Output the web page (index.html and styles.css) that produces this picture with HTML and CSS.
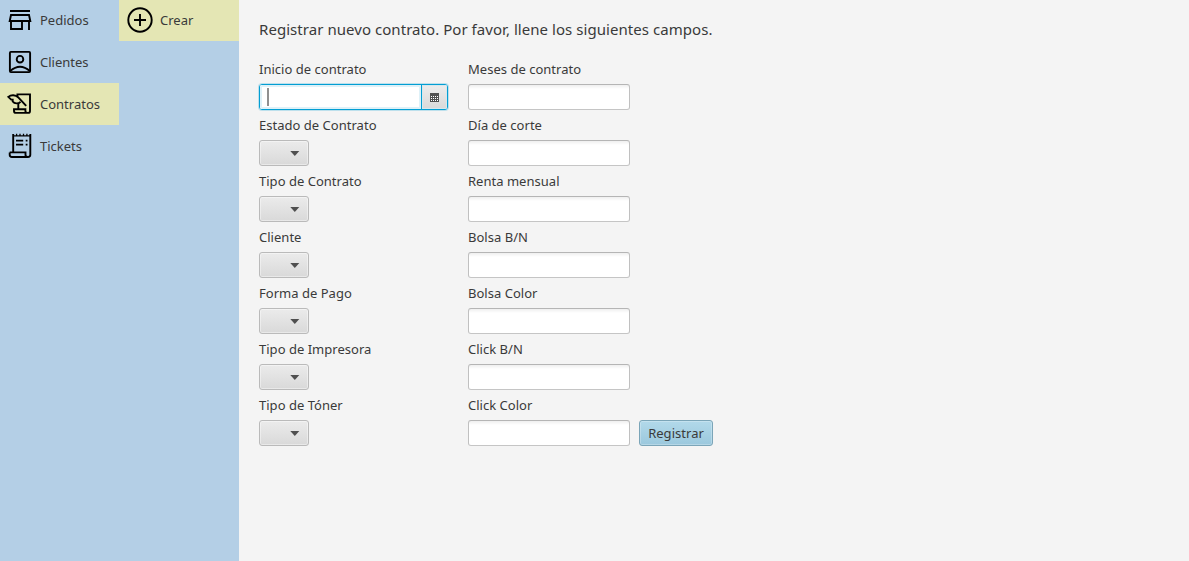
FILE: index.html
```
<!DOCTYPE html>
<html lang="es">
<head>
<meta charset="utf-8">
<title>Contratos</title>
<link rel="stylesheet" href="styles.css">
</head>
<body>
<div class="app">
  <nav class="menu">
    <a class="item"><svg class="icon" viewBox="0 0 30 30"><path d="M5 6h20M6 10h18l1.3 6H4.7zM6 16v8h11v-8M24 16v9"/></svg><span>Pedidos</span></a>
    <a class="item"><svg class="icon" viewBox="0 0 30 30"><rect x="4.9" y="4.9" width="20.2" height="20.2" rx="1"/><circle cx="15" cy="12.2" r="3.3"/><path d="M5.2 24Q15 15.4 24.8 24"/></svg><span>Clientes</span></a>
    <a class="item active"><svg class="icon" viewBox="0 0 30 30"><path d="M12.4 8V5.4H25V22q0 1.9-1.9 1.9H11q-2 0-2-2v-1.7h11.4V22q0 1.9 2.2 1.9M13.3 14.5v5.5"/><path d="M21.2 16.8L13.5 8.6C10.5 5.5 6 5.6 3.3 7.9l2.9 2.7h1.5v1.9c1.8 2.5 5.8 2.5 7.8.3"/></svg><span>Contratos</span></a>
    <a class="item"><svg class="icon" viewBox="0 0 30 30"><path d="M8.2 3v18M4.7 21.4h15.8V24q0 2 2.4 2 2.4 0 2.4-2.2V3M4.7 21.4v2.4Q4.7 26 6.9 26H23"/><path class="thin" d="M8.2 4.8h17.1M11.6 2.8v2M15 2.8v2M18.5 2.8v2M21.9 2.8v2"/><path class="rows" d="M11 9.6h7.2M11 13.6h7.2M20.7 9.6h1.8M20.7 13.6h1.8"/></svg><span>Tickets</span></a>
  </nav>
  <nav class="menu submenu">
    <a class="item active"><svg class="icon" viewBox="0 0 30 30"><circle cx="15" cy="15" r="11.7"/><path d="M15 9v12M9 15h12"/></svg><span>Crear</span></a>
  </nav>
  <main class="content">
    <h1 class="title">Registrar nuevo contrato. Por favor, llene los siguientes campos.</h1>
    <form class="form">
      <div class="column">
        <div class="field"><label>Inicio de contrato</label>
          <div class="datepicker"><div class="date-input"><i class="caret"></i></div><div class="date-button"><svg class="calendar" viewBox="0 0 9 9"><path d="M0 0h9v9H0z"/><path class="dots" d="M1 3h1v1H1zM3 3h1v1H3zM5 3h1v1H5zM7 3h1v1H7zM1 5h1v1H1zM3 5h1v1H3zM5 5h1v1H5zM7 5h1v1H7zM1 7h1v1H1zM3 7h1v1H3zM5 7h1v1H5zM7 7h1v1H7z"/></svg></div></div></div>
        <div class="field"><label>Estado de Contrato</label><div class="combo"><i class="arrow"></i></div></div>
        <div class="field"><label>Tipo de Contrato</label><div class="combo"><i class="arrow"></i></div></div>
        <div class="field"><label>Cliente</label><div class="combo"><i class="arrow"></i></div></div>
        <div class="field"><label>Forma de Pago</label><div class="combo"><i class="arrow"></i></div></div>
        <div class="field"><label>Tipo de Impresora</label><div class="combo"><i class="arrow"></i></div></div>
        <div class="field"><label>Tipo de Tóner</label><div class="combo"><i class="arrow"></i></div></div>
      </div>
      <div class="column second">
        <div class="field"><label>Meses de contrato</label><div class="input"></div></div>
        <div class="field"><label>Día de corte</label><div class="input"></div></div>
        <div class="field"><label>Renta mensual</label><div class="input"></div></div>
        <div class="field"><label>Bolsa B/N</label><div class="input"></div></div>
        <div class="field"><label>Bolsa Color</label><div class="input"></div></div>
        <div class="field"><label>Click B/N</label><div class="input"></div></div>
        <div class="field"><label>Click Color</label><div class="input"></div></div>
      </div>
      <button class="submit" type="button">Registrar</button>
    </form>
  </main>
</div>
</body>
</html>
```
FILE: styles.css
```
* { box-sizing: border-box; }
body {
  margin: 0;
  background: #f4f4f4;
  color: #3a3a3a;
  font: 13px/18px "Noto Sans", sans-serif;
}
.app { display: flex; height: 561px; overflow: hidden; }
.menu { width: 119px; background: #b4cfe6; }
.submenu { width: 120px; }
.item {
  display: flex;
  align-items: center;
  gap: 5px;
  height: 42px;
  padding-left: 5px;
}
.submenu .item { padding-left: 6px; }
.item:first-child { margin-top: -1px; }
.active { background: #e4e6b4; }
.icon {
  width: 30px;
  height: 30px;
  fill: none;
  stroke: #000;
  stroke-width: 1.9;
}
.icon .thin { stroke-width: 1.3; }
.icon .rows { stroke-width: 1.6; }
.content { flex: 1; padding: 19px 20px; }
.title {
  margin: 0;
  font-size: 15px;
  line-height: 20px;
  font-weight: 400;
  letter-spacing: .05px;
}
.form { display: flex; margin-top: 21px; }
.column { width: 209px; }
.second { width: 171px; }
.field { height: 56px; }
.field label { display: block; height: 24px; line-height: 19px; letter-spacing: .02px; }
.input, .combo, .submit {
  height: 26px;
  border: 1px solid #bababa;
  border-radius: 3px;
}
.input {
  width: 162px;
  border-color: #b5b5b5 #c0c0c0 #c5c5c5;
  background: linear-gradient(#efefef, #fff 4px);
}
.combo {
  display: flex;
  align-items: center;
  justify-content: flex-end;
  width: 50px;
  padding-right: 8px;
  background: linear-gradient(#ebebeb, #d9d9d9);
  box-shadow: inset 0 0 0 1px rgba(255, 255, 255, .4);
}
.arrow {
  width: 10px;
  height: 4.8px;
  margin-top: 1px;
  background: #4f4f4f;
  clip-path: polygon(3% 0, 93% 0, 48% 100%);
}
.datepicker {
  display: flex;
  width: 189px;
  height: 26px;
  border: 1px solid #039ed3;
  border-radius: 3px;
  box-shadow: 0 0 0 1px #bde0ec;
  overflow: hidden;
}
.date-input {
  display: flex;
  align-items: center;
  width: 161px;
  padding-left: 7px;
  background: #fff;
  box-shadow: inset 0 0 0 2px #def1f8;
}
.caret { width: 2px; height: 18px; background: #909090; }
.date-button {
  display: flex;
  align-items: center;
  justify-content: center;
  flex: 1;
  padding-right: 1px;
  border-left: 1px solid #039ed3;
  background: linear-gradient(#ececec, #d9d9d9);
  box-shadow: inset 0 0 0 1px #d7e7ed;
}
.calendar { width: 9px; height: 9px; fill: #4f4f4f; }
.calendar .dots { fill: #fff; }
.submit {
  width: 74px;
  margin: 360px 0 0;
  padding: 0;
  border-color: #7ba5b8;
  background: linear-gradient(#b2d9ea, #9bc8dd);
  box-shadow: inset 0 0 0 1px rgba(255, 255, 255, .25);
  color: #3a3a3a;
  font: inherit;
  letter-spacing: .03px;
}
```
